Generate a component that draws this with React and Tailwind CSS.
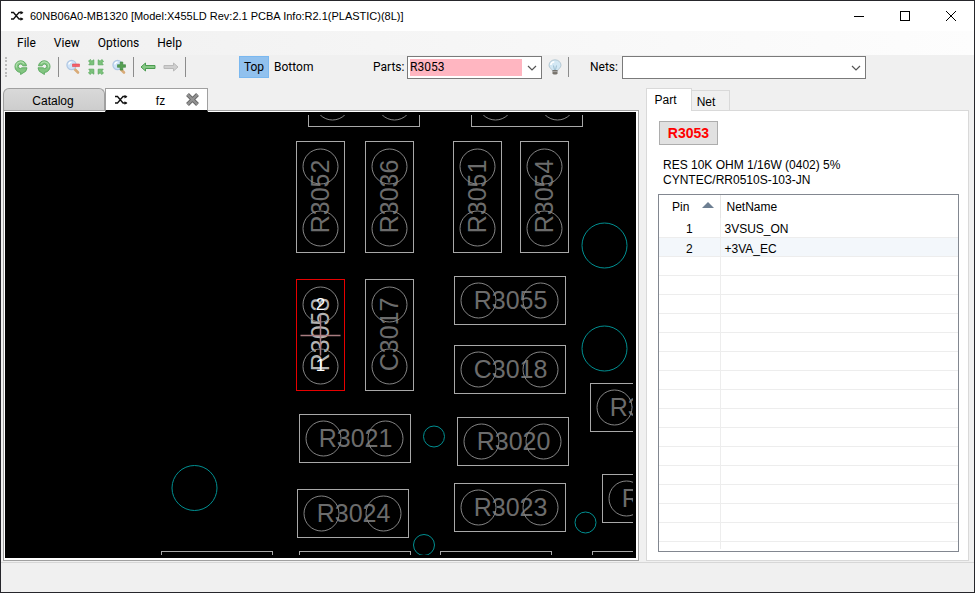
import React from "react";

const parts = [
  { x: 363, y: 102 },
  { x: 526, y: 102 },
  { name: "R3052", x: 320, y: 197, vertical: true },
  { name: "R3036", x: 389, y: 197, vertical: true },
  { name: "R3051", x: 477, y: 197, vertical: true },
  { name: "R3054", x: 544, y: 197, vertical: true },
  { name: "R3053", x: 320, y: 335, vertical: true, selected: true },
  { name: "C3017", x: 389, y: 335, vertical: true },
  { name: "R3055", x: 509, y: 300 },
  { name: "C3018", x: 509, y: 369 },
  { name: "R3022", x: 645, y: 407 },
  { name: "R3021", x: 354, y: 438 },
  { name: "R3020", x: 512, y: 441 },
  { name: "R3024", x: 352, y: 513 },
  { name: "R3023", x: 509, y: 507 },
  { name: "R3027", x: 657, y: 498 },
  { x: 216, y: 575 },
  { x: 354, y: 575 },
  { x: 495, y: 575 },
  { x: 647, y: 575 },
];

const vias = [
  { x: 604.5, y: 245.5, r: 22.5 },
  { x: 604.5, y: 348.5, r: 22.5 },
  { x: 194.5, y: 488, r: 22.5 },
  { x: 434, y: 436.5, r: 10.5 },
  { x: 585.5, y: 522.5, r: 10.5 },
  { x: 424, y: 545, r: 10.5 },
];

const pins = [
  { pin: 1, net: "3VSUS_ON" },
  { pin: 2, net: "+3VA_EC" },
];

const emptyRows = Array.from({ length: 15 });

function ShuffleIcon() {
  return (
    <svg width="14" height="10" viewBox="0 0 14 10" fill="none" stroke="#111" strokeWidth="1.3">
      <path d="M1 1.5h2.500L9 8h3.500M1 8h2.500L9 1.500h3.500" />
      <path d="M10.500 0v3.400L13.500 1.700zM10.500 6.300v3.400l3-1.700z" fill="#111" stroke="none" />
    </svg>
  );
}

function RotateIcon({ flip }) {
  return (
    <svg width="16" height="16" viewBox="0 0 16 16" className={flip ? "-scale-x-100" : ""}>
      <path
        d="M13.500 6.800A5.800 5.800 0 1 0 7.600 13.400V15.500L12.800 12.200L14 8.800H8.800L7.600 9.600A2.300 2.300 0 1 1 9.800 6.800z"
        fill="#82c581"
        stroke="#58a75c"
        strokeWidth=".9"
        strokeLinejoin="round"
      />
      <path d="M3.500 8.500A4.300 4.300 0 0 1 11 4.600" fill="none" stroke="#b2dfaf" strokeWidth="1.200" />
    </svg>
  );
}

function ZoomIcon({ plus }) {
  return (
    <svg width="16" height="16" viewBox="0 0 16 16" fill="none">
      <path d="M9.500 10l3.500 3.500" stroke="#d9ab78" strokeWidth="2.600" strokeLinecap="round" />
      <circle cx="6.500" cy="6" r="4.600" fill="#cfe3f8" stroke="#b1c8e4" strokeWidth="1.200" />
      <path d="M3.800 5.500a2.800 2.800 0 0 1 2.700-2.300" stroke="#fff" strokeWidth="1.300" />
      {plus ? (
        <path d="M9.200 3h2.600v2.700h2.700v2.600h-2.700V11H9.200V8.300H6.500V5.700h2.700z" fill="#56a052" stroke="#39813c" strokeWidth=".6" />
      ) : (
        <path d="M7.500 5h7v2.600h-7z" fill="#f4606a" stroke="#e04450" strokeWidth=".6" />
      )}
    </svg>
  );
}

function FitIcon() {
  return (
    <svg width="16" height="16" viewBox="0 0 16 16" fill="#7cc27c" stroke="#58a95c" strokeWidth=".8">
      {[0, 90, 180, 270].map((angle) => (
        <path key={angle} transform={`rotate(${angle} 8 8)`} d="M.5 2.200L2.200.5l1.700 1.700L5.800.8v5H.8l1.500-1.900z" />
      ))}
    </svg>
  );
}

function ArrowIcon({ forward }) {
  return (
    <svg width="16" height="10" viewBox="0 0 16 10" className={forward ? "-scale-x-100" : ""}>
      <path
        d="M1 5l4.500-4v2.500h9.500v3H5.500V9z"
        fill={forward ? "#cfcfcf" : "#86c884"}
        stroke={forward ? "#b9b9b9" : "#4b9b50"}
      />
    </svg>
  );
}

function BulbIcon() {
  return (
    <svg width="16" height="16" viewBox="0 0 16 16">
      <path d="M8 .8a6 5.500 0 0 0-6 5.400c0 2.800 3 3.600 3.200 5.300h5.600c.2-1.700 3.200-2.500 3.200-5.300A6 5.500 0 0 0 8 .8z" fill="#d3e8f4" stroke="#a8bfcc" strokeWidth=".8" />
      <path d="M3.800 6a4 3.500 0 0 1 3.500-3.300" fill="none" stroke="#fff" strokeWidth="1.500" />
      <path d="M6.500 6.500L7.500 11M9.500 6.500l-1 4.500" stroke="#8fb4c8" strokeWidth=".8" />
      <path d="M5.500 11h5v3.200L9.500 15.500h-3l-1-1.300z" fill="#77736c" />
      <path d="M5.500 12.600h5" stroke="#bbb" strokeWidth=".7" />
    </svg>
  );
}

function Chevron() {
  return (
    <svg width="10" height="6" viewBox="0 0 10 6" fill="none" stroke="#555" strokeWidth="1.200" className="pointer-events-none absolute right-1 top-2">
      <path d="M1 1l4 4 4-4" />
    </svg>
  );
}

function Separator() {
  return <div className="h-5 w-px bg-[#8c8c8c]" />;
}

function BoardPart({ part }) {
  const { name, x, y, vertical, selected } = part;
  return (
    <g transform={`translate(${x}.5 ${y}.5)${vertical ? " rotate(-90)" : ""}`}>
      {name && (
        <text
          x="1"
          y="8"
          textAnchor="middle"
          fontSize="25"
          fill={selected ? "#b4b4b4" : "#6c6c6c"}
        >
          {name}
        </text>
      )}
      <rect x="-55" y="-24" width="111" height="48" fill="none" stroke={selected ? "#e60000" : "#a8a8a8"} />
      <circle cx="-31" r="17.500" fill="none" stroke="#858585" />
      <circle cx="31" r="17.500" fill="none" stroke="#858585" />
      {selected && <path d="M0-20v40M-20 0h40" stroke="#a87c80" strokeWidth="1.500" />}
    </g>
  );
}

function Board() {
  return (
    <svg
      className="block h-full w-full"
      viewBox="5 112 631 446"
      preserveAspectRatio="xMinYMin slice"
      fontFamily="'Liberation Sans', Arial, sans-serif"
    >
      <clipPath id="board-area">
        <rect x="8" y="115" width="625" height="440" />
      </clipPath>
      <g clipPath="url(#board-area)">
        {parts.map((part) => (
          <BoardPart key={`${part.x}-${part.y}`} part={part} />
        ))}
        {vias.map((via) => (
          <circle key={`${via.x}-${via.y}`} cx={via.x} cy={via.y} r={via.r} fill="none" stroke="#008f91" />
        ))}
        <g fill="#fff" fontSize="17" textAnchor="middle">
          <text x="320.500" y="310">2</text>
          <text x="320.500" y="371">1</text>
        </g>
      </g>
    </svg>
  );
}

function TitleBar() {
  return (
    <header className="flex h-[30px] items-center bg-white pl-[9px]">
      <ShuffleIcon />
      <h1 className="flex-1 pl-[6px] font-['Liberation_Sans',Arial,sans-serif] text-[11px]">
        60NB06A0-MB1320 [Model:X455LD Rev:2.1 PCBA Info:R2.1(PLASTIC)(8L)]
      </h1>
      <button aria-label="Minimize" className="flex h-full w-[46px] items-center justify-center">
        <svg width="10" height="10" stroke="#000"><path d="M0 5.500h10" /></svg>
      </button>
      <button aria-label="Maximize" className="flex h-full w-[46px] items-center justify-center">
        <svg width="10" height="10" stroke="#000" fill="none"><rect x=".5" y=".5" width="9" height="9" /></svg>
      </button>
      <button aria-label="Close" className="flex h-full w-[46px] items-center justify-center">
        <svg width="10" height="10" stroke="#000"><path d="M0 0l10 10M10 0L0 10" /></svg>
      </button>
    </header>
  );
}

function MenuBar() {
  return (
    <nav className="flex h-6 items-center gap-[18px] bg-linear-to-r from-[#f0f0f0] to-[#fdfdfd] pl-4">
      <button>File</button>
      <button>View</button>
      <button>Options</button>
      <button>Help</button>
    </nav>
  );
}

function Toolbar() {
  return (
    <div className="flex h-6 items-center pl-1">
      <div className="h-5 w-px border-l-2 border-dotted border-[#bcbcbc]" />
      <div className="flex items-center gap-[7px] px-[6px]">
        <button aria-label="Rotate left"><RotateIcon /></button>
        <button aria-label="Rotate right"><RotateIcon flip /></button>
      </div>
      <Separator />
      <div className="flex items-center gap-[7px] px-[6px]">
        <button aria-label="Zoom out"><ZoomIcon /></button>
        <button aria-label="Fit"><FitIcon /></button>
        <button aria-label="Zoom in"><ZoomIcon plus /></button>
      </div>
      <Separator />
      <div className="flex items-center gap-[7px] px-[6px]">
        <button aria-label="Back"><ArrowIcon /></button>
        <button aria-label="Forward"><ArrowIcon forward /></button>
      </div>
      <Separator />
      <button className="ml-[53px] h-[22px] w-[30px] border border-[#7ab8f0] bg-[#91c1ee]">Top</button>
      <button className="ml-[5px] w-[41px] text-left">Bottom</button>
      <label htmlFor="parts" className="ml-[58px] w-[34px]">Parts:</label>
      <div className="relative h-[23px] w-[135px] border border-[#7a7a7a] bg-white">
        <select id="parts" className="h-full w-full appearance-none bg-[#ffb6c1] bg-clip-content py-[2px] pl-[2px] pr-[19px] leading-4">
          <option>R3053</option>
          <option>R3052</option>
        </select>
        <Chevron />
      </div>
      <button aria-label="Highlight" className="px-[5px]"><BulbIcon /></button>
      <Separator />
      <label htmlFor="nets" className="ml-[21px] w-8">Nets:</label>
      <div className="relative h-[23px] w-[244px] border border-[#7a7a7a] bg-white">
        <select id="nets" className="h-full w-full appearance-none pl-1">
          <option></option>
          <option>3VSUS_ON</option>
          <option>+3VA_EC</option>
        </select>
        <Chevron />
      </div>
    </div>
  );
}

function BoardPanel() {
  return (
    <section className="flex min-w-0 flex-1 flex-col">
      <div className="flex h-[22px] font-['Liberation_Sans',Arial,sans-serif]">
        <button className="w-[102px] rounded-t-md border border-b-0 border-[#a0a0a0] bg-linear-to-b from-[#d9d9d9] to-[#cdcdcd] pt-[2px] pr-[2px]">
          Catalog
        </button>
        <div className="z-10 -mb-[2px] flex w-[103px] items-center border border-b-2 border-[#a0a0a0] border-b-black bg-white pl-2">
          <ShuffleIcon />
          <span className="flex-1 pt-[2px] pl-[14px] text-center">fz</span>
          <button aria-label="Close tab" className="w-7 pl-[6px]">
            <svg width="16" height="16" viewBox="0 0 16 16" fill="none">
              <path d="M2.500 2.500l10 10M12.500 2.500l-10 10" stroke="#666" strokeWidth="4" />
              <path d="M2.500 2.500l10 10M12.500 2.500l-10 10" stroke="#929292" strokeWidth="2.400" />
            </svg>
          </button>
        </div>
      </div>
      <div className="flex min-h-0 flex-1 border border-[#a0a0a0] bg-white pt-px pr-[2px] pb-[2px] pl-px">
        <div className="h-full w-full bg-black">
          <Board />
        </div>
      </div>
    </section>
  );
}

function PartPanel() {
  return (
    <aside className="flex w-[323px] flex-col font-['Liberation_Sans',Arial,sans-serif]">
      <div className="flex h-[22px] items-end">
        <button className="z-10 -mb-px h-[23px] w-[46px] border border-b-0 border-[#d9d9d9] bg-white pr-[7px]">Part</button>
        <button className="h-5 w-[38px] border border-b-0 border-l-0 border-[#d9d9d9] pt-[2px] pr-[9px]">Net</button>
      </div>
      <div className="flex flex-1 flex-col border border-[#d9d9d9] bg-white pt-[10px] pr-[9px] pb-2 pl-[11px]">
        <button className="ml-px h-6 w-[59px] border border-[#adadad] bg-[#e1e1e1] text-sm font-bold text-[#ff0000]">
          R3053
        </button>
        <p className="mt-[13px] ml-[5px] leading-[15px]">
          RES 10K OHM 1/16W (0402) 5%
          <br />
          CYNTEC/RR0510S-103-JN
        </p>
        <div className="mt-[6px] flex-1 border border-[#828790]">
          <table className="w-full table-fixed border-collapse">
            <thead>
              <tr className="h-[23px]">
                <th className="w-[61px] border-r border-[#e5e5e5] p-0 font-normal">
                  <span className="flex items-center gap-[13px] pl-[13px]">
                    Pin
                    <svg width="12" height="6" className="mb-1"><path d="M6 0l6 6H0z" fill="#6d7f92" /></svg>
                  </span>
                </th>
                <th className="p-0 pl-[6px] text-left font-normal">NetName</th>
              </tr>
            </thead>
            <tbody>
              {pins.map((row) => (
                <tr key={row.pin} className="h-[19px] border-b border-[#ededed] even:bg-[#f3f7fb]">
                  <td className="border-r border-[#ededed] p-0 pt-1 text-center leading-[14px]">{row.pin}</td>
                  <td className="p-0 pt-1 pl-1 leading-[14px]">{row.net}</td>
                </tr>
              ))}
              {emptyRows.map((_, i) => (
                <tr key={i} className="h-[19px] border-b border-[#ededed]">
                  <td className="border-r border-[#ededed] p-0"></td>
                  <td className="p-0"></td>
                </tr>
              ))}
              <tr className="h-2">
                <td className="border-r border-[#ededed] p-0"></td>
                <td className="p-0"></td>
              </tr>
            </tbody>
          </table>
        </div>
      </div>
    </aside>
  );
}

function App() {
  return (
    <div className="flex h-screen flex-col border border-[#26262b] bg-[#f0f0f0] font-[Roboto,'Liberation_Sans',sans-serif] text-xs text-black">
      <TitleBar />
      <MenuBar />
      <Toolbar />
      <main className="flex min-h-0 flex-1 gap-[7px] pt-[9px] pr-[5px] pb-px pl-[2px]">
        <BoardPanel />
        <PartPanel />
      </main>
      <footer className="h-[30px] border-t border-[#d7d7d7]"></footer>
    </div>
  );
}

export default App;
